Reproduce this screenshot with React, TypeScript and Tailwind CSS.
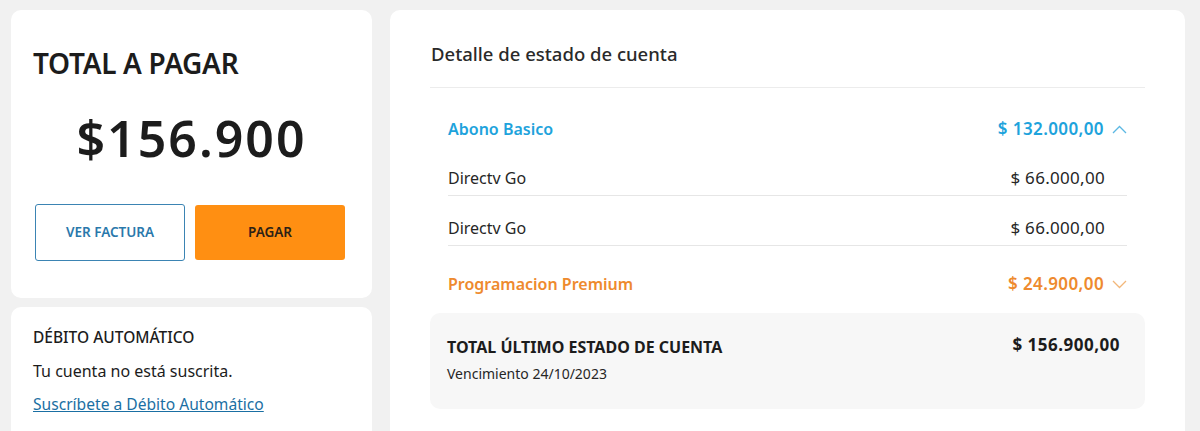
const font = { fontFamily: '"Noto Sans", "Open Sans", sans-serif' };

function Chevron({ up, color }: { up?: boolean; color: string }) {
  return (
    <svg width="15" height="9" viewBox="0 0 15 9" fill="none" className="ml-2">
      <polyline
        points={up ? "1,8 7.5,1.5 14,8" : "1,1 7.5,7.5 14,1"}
        stroke={color}
        strokeWidth="1.3"
        fill="none"
      />
    </svg>
  );
}

function SubRow({ label, amount }: { label: string; amount: string }) {
  return (
    <div className="flex h-[50px] items-start justify-between border-b border-[#e6e6e6] pt-[20px] text-[16px] leading-[24px] text-[#262626]">
      <span>{label}</span>
      <span className="mr-[22px] text-[17px] tracking-[0.3px]">{amount}</span>
    </div>
  );
}

export default function App() {
  return (
    <div style={font} className="flex h-[431px] gap-[18px] overflow-hidden bg-[#f1f1f1] pl-[11px] pr-[15px] pt-[10px]">
      <div className="flex w-[361px] shrink-0 flex-col gap-[9px]">
        <div className="rounded-[10px] bg-white px-[22px] pb-[37px] pt-[31px]">
          <h1 className="text-[28px] font-semibold leading-[44px] tracking-[-0.3px] text-[#1c1c1c]">TOTAL A PAGAR</h1>
          <div className="mt-[23px] text-center text-[50px] font-semibold leading-[60px] tracking-[2px] text-[#1c1c1c]">
            $156.900
          </div>
          <div className="mt-[36px] flex gap-[10px] px-[2px]">
            <button className="h-[57px] w-[150px] rounded-[3px] border border-[#3b84b3] bg-white text-[13.5px] font-semibold text-[#2a78ab]">
              VER FACTURA
            </button>
            <button className="mt-[1px] h-[55px] w-[150px] rounded-[3px] bg-[#ff8f12] text-[13.5px] font-semibold text-[#2b2116]">
              PAGAR
            </button>
          </div>
        </div>
        <div className="flex-1 rounded-t-[10px] bg-white px-[22px] pt-[18px]">
          <div className="text-[15.5px] font-medium leading-[24px] text-[#1c1c1c]">DÉBITO AUTOMÁTICO</div>
          <p className="mt-[10px] text-[16px] leading-[24px] text-[#1c1c1c]">Tu cuenta no está suscrita.</p>
          <a href="#" className="mt-[9px] inline-block text-[15.6px] leading-[24px] text-[#1a6fa3] underline">
            Suscríbete a Débito Automático
          </a>
        </div>
      </div>

      <div className="flex-1 rounded-t-[10px] bg-white px-[40px] pt-[29px]">
        <div className="border-b border-[#ececec] pb-[18px] pl-[1px]">
          <h2 className="text-[18.5px] font-medium leading-[30px] text-[#2a2a2a]">Detalle de estado de cuenta</h2>
        </div>
        <div className="px-[18px]">
          <div className="flex items-center justify-between pb-[5px] pt-[29px] text-[16px] font-semibold leading-[24px] text-[#1ea3dc]">
            <span>Abono Basico</span>
            <span className="flex items-center text-[17px] tracking-[0.4px]">
              $ 132.000,00
              <Chevron up color="#5cb8e3" />
            </span>
          </div>
          <SubRow label="Directv Go" amount="$ 66.000,00" />
          <SubRow label="Directv Go" amount="$ 66.000,00" />
          <div className="flex items-center justify-between pt-[26px] text-[16px] font-semibold leading-[24px] text-[#ee8a2e]">
            <span>Programacion Premium</span>
            <span className="flex items-center text-[17px] tracking-[0.4px]">
              $ 24.900,00
              <Chevron color="#f2b77a" />
            </span>
          </div>
        </div>
        <div className="mt-[17px] h-[96px] rounded-[10px] bg-[#f7f7f7] pl-[17px] pr-[25px] pt-[22px]">
          <div className="flex items-start justify-between">
            <div>
              <div className="text-[16px] font-bold leading-[24px] text-[#1c1c1c]">TOTAL ÚLTIMO ESTADO DE CUENTA</div>
              <div className="mt-[5px] text-[14px] leading-[20px] text-[#262626]">Vencimiento 24/10/2023</div>
            </div>
            <div className="-mt-[2px] text-[17px] font-bold leading-[24px] tracking-[0.5px] text-[#1c1c1c]">$ 156.900,00</div>
          </div>
        </div>
      </div>
    </div>
  );
}
